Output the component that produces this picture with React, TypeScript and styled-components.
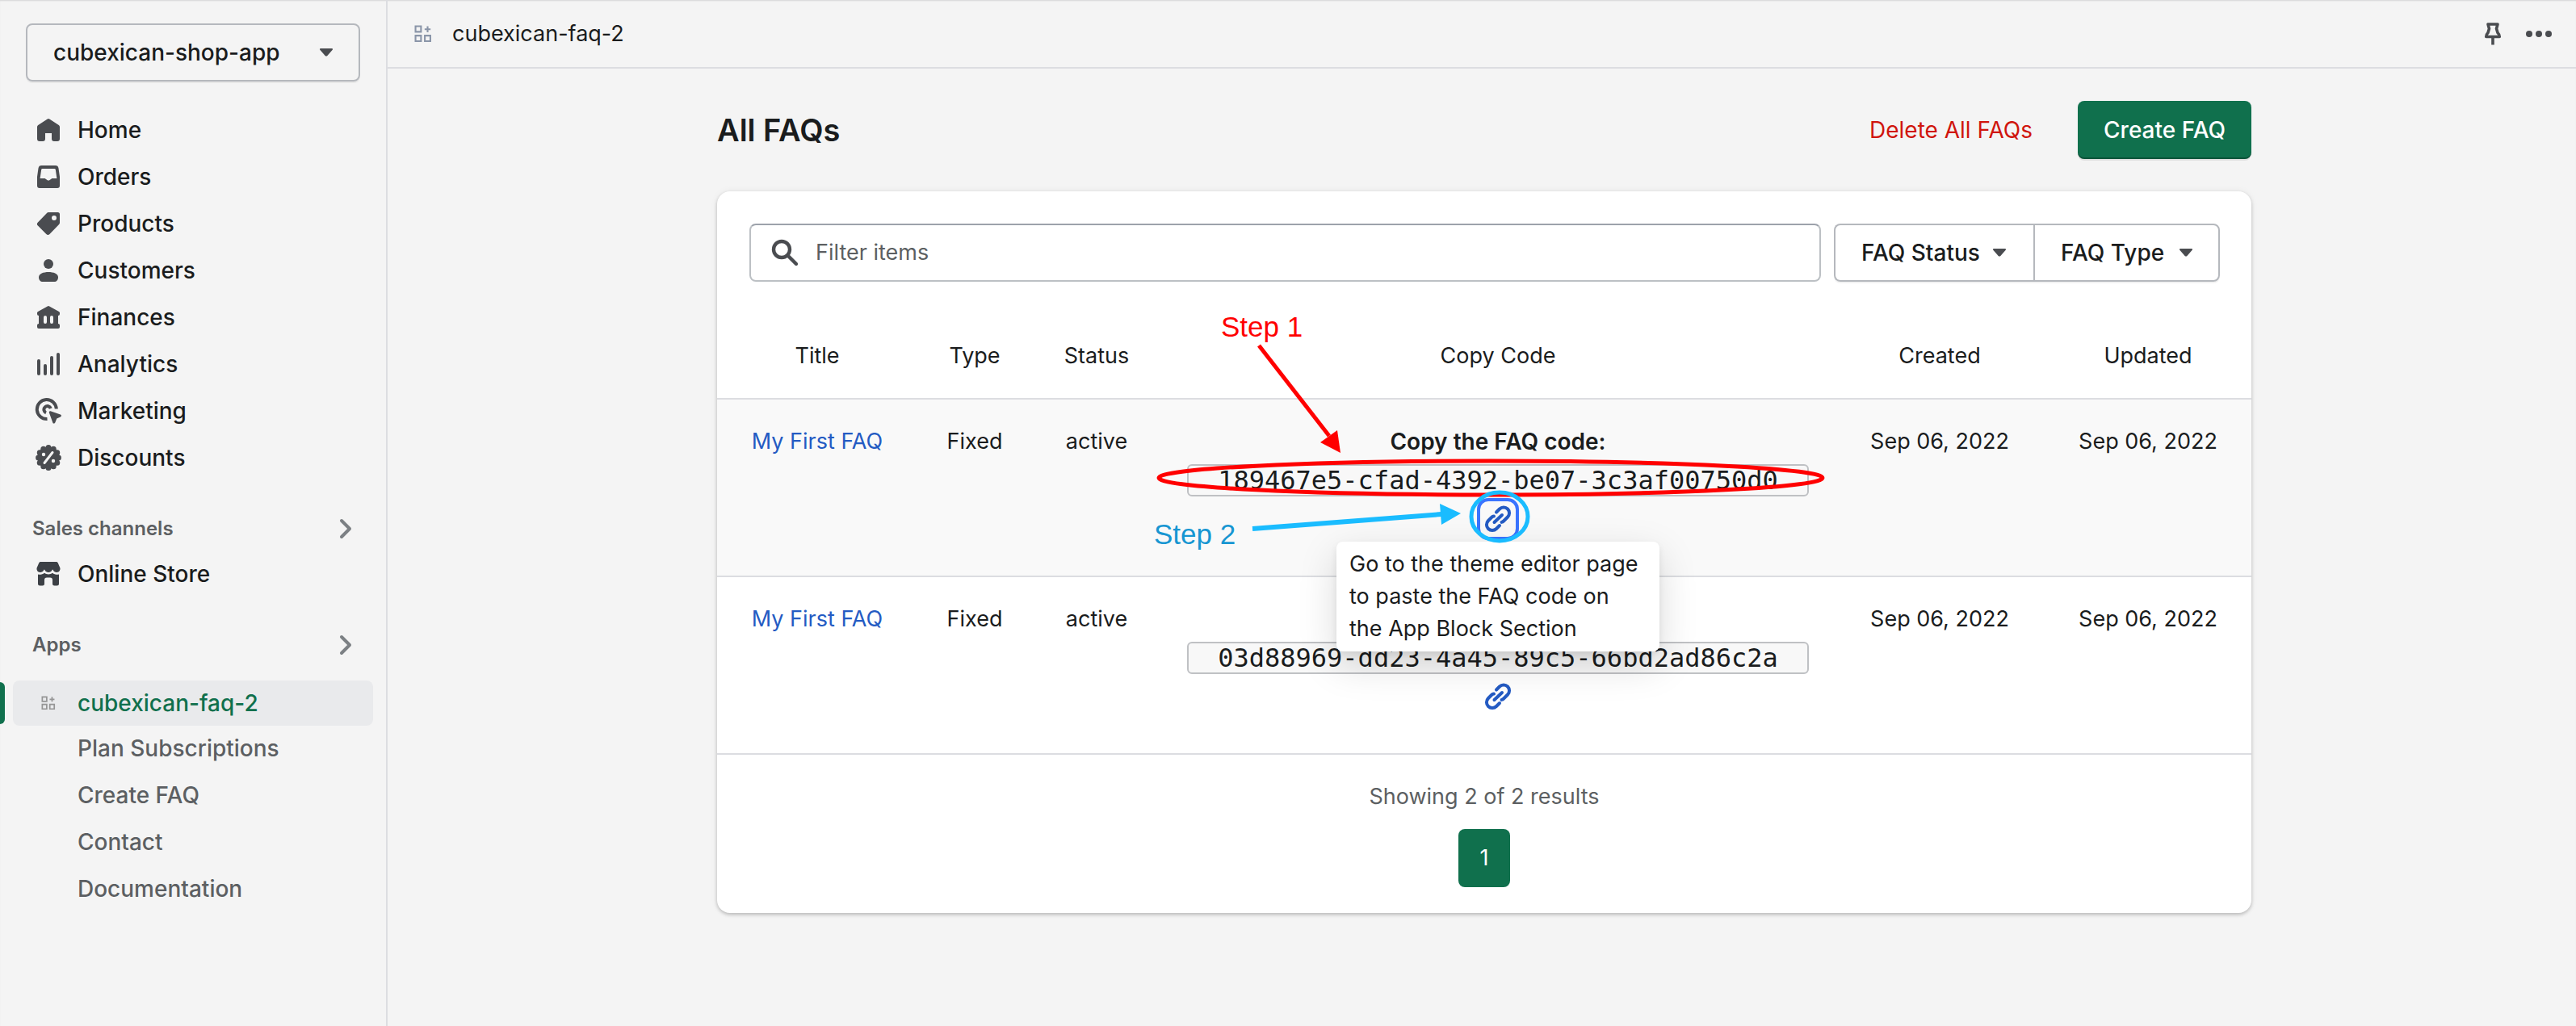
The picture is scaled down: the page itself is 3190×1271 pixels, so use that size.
import React from "react";
import styled, { createGlobalStyle } from "styled-components";

const ink = "#1a1c1d";
const muted = "#5c5f62";
const icon = "#4a4c50";
const green = "#10704d";
const line = "#dcdde1";
const blue = "#245bc3";

const GlobalStyle = createGlobalStyle`
  * { box-sizing: border-box; }
  body {
    margin: 0;
    background: #f4f4f4;
    color: ${ink};
    font: 400 27px/40px Inter, "Liberation Sans", sans-serif;
  }
  button, input, select { font: inherit; color: inherit; margin: 0; }
  a { text-decoration: none; color: inherit; }
  ul { list-style: none; margin: 0; padding: 0; }
`;

const Shell = styled.div`
  display: grid;
  grid-template-columns: 480px minmax(0, 1fr);
  min-height: 100vh;
  box-shadow: inset 0 2px 2px -1px #d4d4d6;
`;

/* Sidebar */

const Sidebar = styled.nav`
  border-right: 2px solid ${line};
  padding: 29px 16px 40px;
  font-size: 28px;
  font-weight: 500;
`;

const StorePicker = styled.div`
  margin: 0 16px 32px;
`;

const SelectBox = styled.div`
  display: grid;
  align-items: center;
  > * { grid-area: 1 / 1; }
  > svg { justify-self: end; margin-right: 32px; pointer-events: none; }
`;

const Select = styled.select`
  appearance: none;
  width: 100%;
  height: 72px;
  padding: 0 66px 0 32px;
  border: 2px solid #b5b8bd;
  border-radius: 8px;
  background: transparent;
  font-size: 28px;
  font-weight: 500;
  box-shadow: 0 2px 0 rgba(0, 0, 0, 0.05);
`;

const NavList = styled.ul<{ $spaced?: boolean }>`
  display: grid;
  gap: 2px;
  margin-top: ${(p) => (p.$spaced ? 16 : 0)}px;
`;

const NavItem = styled.li<{ $active?: boolean }>`
  position: relative;
  ${(p) =>
    p.$active &&
    `&::before {
      content: "";
      position: absolute;
      left: -16px;
      top: 2px;
      bottom: 2px;
      width: 6px;
      border-radius: 0 6px 6px 0;
      background: ${green};
    }`}
`;

const NavLink = styled.a<{ $active?: boolean }>`
  display: grid;
  grid-template-columns: 40px auto;
  justify-content: start;
  align-items: center;
  column-gap: 16px;
  height: 56px;
  padding: 0 24px;
  border-radius: 8px;
  color: ${(p) => (p.$active ? green : ink)};
  background: ${(p) => (p.$active ? "#e9eaec" : "transparent")};
`;

const SubLink = styled.a`
  display: flex;
  align-items: center;
  height: 56px;
  padding-left: 80px;
  color: ${muted};
`;

const SectionLink = styled.a`
  display: flex;
  align-items: center;
  justify-content: space-between;
  height: 56px;
  margin-top: 32px;
  padding: 0 26px 0 24px;
  color: ${muted};
  font-size: 24px;
  font-weight: 600;
`;

/* Top bar */

const Main = styled.div`
  min-width: 0;
`;

const TopBar = styled.header`
  display: flex;
  align-items: center;
  gap: 12px;
  height: 85px;
  padding: 0 20px 0 24px;
  border-bottom: 2px solid ${line};
`;

const AppName = styled.div`
  display: flex;
  align-items: center;
  gap: 16px;
  flex: 1;
`;

const IconButton = styled.button`
  display: grid;
  place-items: center;
  padding: 0 8px;
  border: 0;
  background: none;
`;

/* Page */

const Page = styled.main`
  max-width: 1996px;
  margin: 0 auto;
  padding: 40px 45px 40px 51px;
`;

const PageHeader = styled.div`
  display: flex;
  align-items: center;
  gap: 56px;
  margin-bottom: 40px;
`;

const PageTitle = styled.h1`
  flex: 1;
  margin: 0;
  font-size: 38px;
  line-height: 56px;
  font-weight: 600;
`;

const PlainButton = styled.button`
  padding: 0;
  border: 0;
  background: none;
  color: #d0150d;
  font-size: 28px;
`;

const PrimaryButton = styled.button`
  height: 72px;
  padding: 0 32px;
  border: 0;
  border-radius: 8px;
  background: ${green};
  color: #fff;
  font-size: 28px;
  font-weight: 500;
  box-shadow: 0 2px 0 rgba(0, 0, 0, 0.08), inset 0 -2px 0 rgba(0, 0, 0, 0.25);
`;

const Card = styled.section`
  border-radius: 16px;
  background: #fff;
  box-shadow: 0 0 10px rgba(23, 24, 24, 0.06), 0 2px 4px rgba(0, 0, 0, 0.22);
`;

const Toolbar = styled.div`
  display: flex;
  gap: 16px;
  padding: 40px 39px 0 40px;
`;

const SearchField = styled.label`
  display: flex;
  align-items: center;
  flex: 1;
  gap: 18px;
  height: 72px;
  padding: 0 22px;
  border: 2px solid #bcc0c4;
  border-top-color: #9da2ab;
  border-radius: 8px;
`;

const SearchInput = styled.input`
  flex: 1;
  min-width: 0;
  padding: 0;
  border: 0;
  outline: 0;
  background: none;
  &::placeholder { color: ${muted}; opacity: 1; }
`;

const FilterGroup = styled.div`
  display: flex;
  > :first-child ${Select} { border-radius: 8px 0 0 8px; border-right-width: 0; }
  > :last-child ${Select} { border-radius: 0 8px 8px 0; }
`;

/* Table */

const Table = styled.table`
  width: 100%;
  table-layout: fixed;
  border-collapse: separate;
  border-spacing: 0;
  text-align: center;
`;

const HeadCell = styled.th`
  height: 144px;
  padding: 40px 0 0;
  font-weight: 400;
`;

const Row = styled.tr<{ $hover?: boolean }>`
  background: ${(p) => (p.$hover ? "#f9f9f9" : "transparent")};
`;

const Cell = styled.td`
  position: relative;
  height: 220px;
  padding: 32px 0 0;
  border-top: 2px solid ${line};
  vertical-align: top;
`;

const TitleLink = styled.a`
  color: ${blue};
`;

const CopyStack = styled.div`
  display: grid;
  justify-items: center;
  gap: 8px;
`;

const CopyLabel = styled.strong<{ $covered: boolean }>`
  font-size: 28px;
  font-weight: 600;
  visibility: ${(p) => (p.$covered ? "hidden" : "visible")};
`;

const Code = styled.code`
  width: 770px;
  height: 40px;
  border: 2px solid #bfc1c4;
  border-radius: 6px;
  background: #f8f8f8;
  font: 32px/36px "DejaVu Sans Mono", monospace;
`;

const EditorLink = styled.a<{ $focused?: boolean }>`
  position: relative;
  display: grid;
  place-items: center;
  width: 40px;
  height: 40px;
  border-radius: 8px;
  color: ${blue};
  outline: ${(p) => (p.$focused ? "4px solid #3a74ff" : "none")};
  outline-offset: 2px;
`;

const Tooltip = styled.span`
  position: absolute;
  z-index: 2;
  top: 48px;
  left: 50%;
  width: 400px;
  margin-left: -200px;
  padding: 8px 16px;
  border-radius: 8px;
  background: #fff;
  color: ${ink};
  text-align: left;
  box-shadow: 0 4px 8px rgba(0, 0, 0, 0.08), 0 16px 48px rgba(0, 0, 0, 0.15);
`;

/* Callouts drawn over the first row, centred on the copy column */
const Callouts = styled.div`
  position: absolute;
  z-index: 3;
  left: 50%;
  top: 0;
  width: 840px;
  height: 218px;
  margin-left: -420px;
  pointer-events: none;
  > svg { display: block; overflow: visible; }
`;

const StepLabel = styled.span<{ $x: number; $y: number; $color: string }>`
  position: absolute;
  left: ${(p) => p.$x}px;
  top: ${(p) => p.$y}px;
  color: ${(p) => p.$color};
  white-space: nowrap;
  font: 35px/40px "Liberation Sans", Arial, sans-serif;
`;

const Footer = styled.footer`
  display: grid;
  justify-items: center;
  gap: 20px;
  padding: 32px 0;
  border-top: 2px solid ${line};
  color: ${muted};
`;

const PageButton = styled.button`
  width: 64px;
  height: 72px;
  padding: 0;
  border: 0;
  border-radius: 8px;
  background: ${green};
  color: #fff;
`;

/* Icons on a 40-unit grid */

const Icon = ({ children, color = icon }: { children: React.ReactNode; color?: string }) => (
  <svg width="40" height="40" viewBox="0 0 40 40" fill={color} aria-hidden="true">
    {children}
  </svg>
);

const HomeIcon = () => (
  <Icon>
    <path d="M18.7 6.5a2.6 2.6 0 0 1 2.6 0L32.8 14a2.600 2.600 0 0 1 1.200 2.200V31a3 3 0 0 1-3 3h-4a3 3 0 0 1-3-3v-7h-8v7a3 3 0 0 1-3 3H9a3 3 0 0 1-3-3V16.200A2.600 2.600 0 0 1 7.200 14z" />
  </Icon>
);

const OrdersIcon = () => (
  <Icon>
    <path
      fillRule="evenodd"
      d="M11.500 6h17a4 4 0 0 1 4 3.400L34 20v11a3 3 0 0 1-3 3H9a3 3 0 0 1-3-3V20L7.500 9.400a4 4 0 0 1 4-3.400zM12.500 10a1.300 1.300 0 0 0-1.300 1.100L9.600 22h5.200c1 0 1.600.5 2.200 1 .9.900 1.900 1.500 3 1.500s2.100-.6 3-1.500c.6-.5 1.200-1 2.200-1h5.200l-1.600-10.900A1.300 1.300 0 0 0 27.500 10z"
    />
  </Icon>
);

const ProductsIcon = () => (
  <Icon>
    <path
      fillRule="evenodd"
      d="M20 6h11.500A2.500 2.500 0 0 1 34 8.500V19a3 3 0 0 1-.9 2L21.500 33a3 3 0 0 1-4.200 0L6.900 22.600a3 3 0 0 1 0-4.200L18 6.900A3 3 0 0 1 20 6zM27 10a3 3 0 1 0 0 6 3 3 0 0 0 0-6z"
    />
  </Icon>
);

const CustomersIcon = () => (
  <Icon>
    <circle cx="20" cy="12" r="6" />
    <path d="M8 28.500C8 24 14 22 20 22s12 2 12 6.500c0 3.500-2 5.500-5 5.500H13c-3 0-5-2-5-5.500z" />
  </Icon>
);

const FinancesIcon = () => (
  <Icon>
    <path
      fillRule="evenodd"
      d="M18.800 6.400a2.300 2.300 0 0 1 2.400 0L33 12.900c.6.400 1 1 1 1.700V16a2 2 0 0 1-2 2v10a2 2 0 0 1 2 2v2a2 2 0 0 1-2 2H8a2 2 0 0 1-2-2v-2a2 2 0 0 1 2-2V18a2 2 0 0 1-2-2v-1.400c0-.7.4-1.300 1-1.700zM16 18a2 2 0 0 0-2 2v6a2 2 0 0 0 4 0v-6a2 2 0 0 0-2-2zm8 0a2 2 0 0 0-2 2v6a2 2 0 0 0 4 0v-6a2 2 0 0 0-2-2z"
    />
  </Icon>
);

const AnalyticsIcon = () => (
  <Icon>
    <rect x="6" y="14" width="4" height="20" rx="2" />
    <rect x="14" y="20" width="4" height="14" rx="2" />
    <rect x="22" y="10" width="4" height="24" rx="2" />
    <rect x="30" y="6" width="4" height="28" rx="2" />
  </Icon>
);

const MarketingIcon = () => (
  <Icon>
    <path
      fill="none"
      stroke={icon}
      strokeWidth="4"
      strokeLinecap="butt"
      d="M29.800 17.500A12 12 0 1 0 18.500 30M22.800 17A4.300 4.300 0 1 0 17 22.300"
    />
    <path d="M22.500 20.200l12.300 4.300c1.500.5 1.500 2.300.1 2.900l-4.600 2-2 5.200c-.6 1.500-2.500 1.400-3-.1l-4.400-12.300c-.4-1.300.5-2.300 1.600-2z" />
  </Icon>
);

const DiscountsIcon = () => (
  <Icon>
    <circle cx="20" cy="20" r="13.500" />
    {Array.from({ length: 12 }, (_, i) => {
      const a = (i * Math.PI) / 6;
      return <circle key={i} cx={20 + 12.4 * Math.cos(a)} cy={20 + 12.4 * Math.sin(a)} r="3.500" />;
    })}
    <path stroke="#f4f4f4" strokeWidth="3" strokeLinecap="round" d="M25 13.500l-10 13" />
    <circle cx="14" cy="16" r="2.200" fill="#f4f4f4" />
    <circle cx="26" cy="24" r="2.200" fill="#f4f4f4" />
  </Icon>
);

const StoreIcon = () => (
  <Icon color="#3c4045">
    <path d="M10.500 5h19c1 0 1.700.4 2.200 1.300l2.700 6.200c.6 2.500-1 5.500-4.200 5.500-2 0-3.500-1-4.400-2.800-.4-.8-.9-.8-1.300 0-.9 1.800-2.500 2.800-4.500 2.800s-3.600-1-4.500-2.800c-.4-.8-.9-.8-1.300 0C13.300 17 11.800 18 9.800 18c-3.200 0-4.800-3-4.200-5.500l2.700-6.200C8.800 5.400 9.500 5 10.500 5z" />
    <path d="M7 20.600c3 .6 5.700 0 8-1.800 3 2.300 7 2.300 10 0 2.300 1.800 5 2.400 8 1.800V32a2.500 2.500 0 0 1-2.500 2.500h-3A2.500 2.500 0 0 1 25 32v-4.500a3 3 0 0 0-3-3h-4a3 3 0 0 0-3 3V32a2.500 2.500 0 0 1-2.500 2.500h-3A2.500 2.500 0 0 1 7 32z" />
  </Icon>
);

const AppIcon = ({ size, stroke }: { size: number; stroke: string }) => (
  <svg width="40" height="40" viewBox="0 0 40 40" fill="none" stroke={stroke} strokeWidth="2" aria-hidden="true">
    <g transform={`translate(20 20) scale(${size / 20}) translate(-10 -10)`}>
      <path d="M1 1h6.500v6.500H1zM1 12h6.500v6.500H1zM12 12h6.500v6.500H12zM15.250 1v7M11.750 4.500h7" />
    </g>
  </svg>
);

const Chevron = () => (
  <svg width="16" height="26" viewBox="0 0 16 26" fill="none" stroke="#7c8084" strokeWidth="4" strokeLinecap="round" strokeLinejoin="round" aria-hidden="true">
    <path d="M3 3l10 10L3 23" />
  </svg>
);

const Caret = () => (
  <svg width="20" height="12" viewBox="0 0 20 12" fill={icon} aria-hidden="true">
    <path d="M3 1h14c1 0 1.300 1 .7 1.700l-6.300 7.200c-.8.900-2 .9-2.800 0L2.300 2.700C1.700 2 2 1 3 1z" />
  </svg>
);

const SearchIcon = () => (
  <svg width="40" height="40" viewBox="0 0 40 40" fill="none" stroke={icon} strokeWidth="4.400" strokeLinecap="round" aria-hidden="true">
    <circle cx="16" cy="16" r="10" />
    <path d="M23.500 23.500L34 34" />
  </svg>
);

const PinIcon = () => (
  <svg width="22" height="30" viewBox="0 0 22 30" fill="none" stroke={icon} strokeWidth="3.600" strokeLinejoin="round" aria-hidden="true">
    <path d="M5 3h12l-1.500 5.500L17 13.500c1.500 1.500 2.300 3 2.300 5H2.700c0-2 .8-3.500 2.300-5l1.500-5zM11 19v9.500" />
  </svg>
);

const DotsIcon = () => (
  <svg width="36" height="12" viewBox="0 0 36 12" fill={icon} aria-hidden="true">
    <circle cx="6" cy="6" r="4" />
    <circle cx="18" cy="6" r="4" />
    <circle cx="30" cy="6" r="4" />
  </svg>
);

const LinkIcon = () => (
  <svg width="40" height="40" viewBox="0 0 40 40" fill="none" stroke="currentColor" strokeWidth="4" strokeLinecap="round" aria-hidden="true">
    <path d="M15.500 24.500l9.500-9M18 12l4-4a7 7 0 0 1 10 10l-5 5a5 5 0 0 1-2.500 1.400M22 28.500l-4 4a7 7 0 0 1-10-10l4-4a5 5 0 0 1 3-1.400" transform="translate(0 -.5)" />
  </svg>
);

const mainNav = [
  { label: "Home", Glyph: HomeIcon },
  { label: "Orders", Glyph: OrdersIcon },
  { label: "Products", Glyph: ProductsIcon },
  { label: "Customers", Glyph: CustomersIcon },
  { label: "Finances", Glyph: FinancesIcon },
  { label: "Analytics", Glyph: AnalyticsIcon },
  { label: "Marketing", Glyph: MarketingIcon },
  { label: "Discounts", Glyph: DiscountsIcon },
];

const appPages = ["Plan Subscriptions", "Create FAQ", "Contact", "Documentation"];

const columns = [
  { label: "Title", width: 248 },
  { label: "Type", width: 142 },
  { label: "Status", width: 160 },
  { label: "Copy Code", width: 834 },
  { label: "Created", width: 260 },
  { label: "Updated", width: 256 },
];

const faqs = [
  { code: "189467e5-cfad-4392-be07-3c3af00750d0", active: true },
  { code: "03d88969-dd23-4a45-89c5-66bd2ad86c2a", active: false },
];

const StepCallouts = () => (
  <Callouts>
    <svg width="840" height="218" viewBox="0 0 840 218" fill="none" aria-hidden="true">
      <g stroke="#ff0000" strokeWidth="5">
        <ellipse cx="411" cy="97" rx="411" ry="21" />
        <path d="M124-67l87 112" />
      </g>
      <path fill="#ff0000" d="M200 53l21-15 4 28z" />
      <g stroke="#1abcff" strokeWidth="5">
        <ellipse cx="422" cy="145" rx="35" ry="30" />
        <path strokeWidth="6" d="M116 160l234-18" />
      </g>
      <path fill="#1abcff" d="M348 129l2 26 24-14z" />
    </svg>
    <StepLabel $x={77} $y={-110} $color="#ff0000">Step 1</StepLabel>
    <StepLabel $x={-6} $y={147} $color="#1796d2">Step 2</StepLabel>
  </Callouts>
);

export default function App() {
  return (
    <Shell>
      <GlobalStyle />
      <Sidebar>
        <StorePicker>
          <SelectBox>
            <Select aria-label="Store">
              <option>cubexican-shop-app</option>
            </Select>
            <Caret />
          </SelectBox>
        </StorePicker>
        <NavList>
          {mainNav.map(({ label, Glyph }) => (
            <NavItem key={label}>
              <NavLink href="#">
                <Glyph />
                {label}
              </NavLink>
            </NavItem>
          ))}
        </NavList>
        <SectionLink href="#">
          Sales channels
          <Chevron />
        </SectionLink>
        <NavList>
          <NavItem>
            <NavLink href="#">
              <StoreIcon />
              Online Store
            </NavLink>
          </NavItem>
        </NavList>
        <SectionLink href="#">
          Apps
          <Chevron />
        </SectionLink>
        <NavList $spaced>
          <NavItem $active>
            <NavLink href="#" $active aria-current="page">
              <AppIcon size={17} stroke="#959595" />
              cubexican-faq-2
            </NavLink>
          </NavItem>
        </NavList>
        <NavList>
          {appPages.map((label) => (
            <NavItem key={label}>
              <SubLink href="#">{label}</SubLink>
            </NavItem>
          ))}
        </NavList>
      </Sidebar>

      <Main>
        <TopBar>
          <AppName>
            <AppIcon size={21} stroke="#8a95a8" />
            cubexican-faq-2
          </AppName>
          <IconButton aria-label="Pin app">
            <PinIcon />
          </IconButton>
          <IconButton aria-label="More actions">
            <DotsIcon />
          </IconButton>
        </TopBar>

        <Page>
          <PageHeader>
            <PageTitle>All FAQs</PageTitle>
            <PlainButton>Delete All FAQs</PlainButton>
            <PrimaryButton>Create FAQ</PrimaryButton>
          </PageHeader>

          <Card>
            <Toolbar>
              <SearchField>
                <SearchIcon />
                <SearchInput type="text" placeholder="Filter items" aria-label="Filter items" />
              </SearchField>
              <FilterGroup>
                <SelectBox>
                  <Select aria-label="FAQ Status">
                    <option>FAQ Status</option>
                  </Select>
                  <Caret />
                </SelectBox>
                <SelectBox>
                  <Select aria-label="FAQ Type">
                    <option>FAQ Type</option>
                  </Select>
                  <Caret />
                </SelectBox>
              </FilterGroup>
            </Toolbar>

            <Table>
              <colgroup>
                {columns.map((c) => (
                  <col key={c.label} style={{ width: `${(c.width / 1900) * 100}%` }} />
                ))}
              </colgroup>
              <thead>
                <tr>
                  {columns.map((c) => (
                    <HeadCell key={c.label} scope="col">
                      {c.label}
                    </HeadCell>
                  ))}
                </tr>
              </thead>
              <tbody>
                {faqs.map((faq, i) => (
                  <Row key={faq.code} $hover={faq.active}>
                    <Cell>
                      <TitleLink href="#">My First FAQ</TitleLink>
                    </Cell>
                    <Cell>Fixed</Cell>
                    <Cell>active</Cell>
                    <Cell>
                      <CopyStack>
                        <CopyLabel $covered={i > 0 && faqs[i - 1].active}>Copy the FAQ code:</CopyLabel>
                        <Code>{faq.code}</Code>
                        <EditorLink href="#" $focused={faq.active} aria-label="Open theme editor">
                          <LinkIcon />
                          {faq.active && (
                            <Tooltip role="tooltip">
                              Go to the theme editor page to paste the FAQ code on the App Block Section
                            </Tooltip>
                          )}
                        </EditorLink>
                      </CopyStack>
                      {faq.active && <StepCallouts />}
                    </Cell>
                    <Cell>Sep 06, 2022</Cell>
                    <Cell>Sep 06, 2022</Cell>
                  </Row>
                ))}
              </tbody>
            </Table>

            <Footer>
              Showing 2 of 2 results
              <PageButton aria-current="page">1</PageButton>
            </Footer>
          </Card>
        </Page>
      </Main>
    </Shell>
  );
}
